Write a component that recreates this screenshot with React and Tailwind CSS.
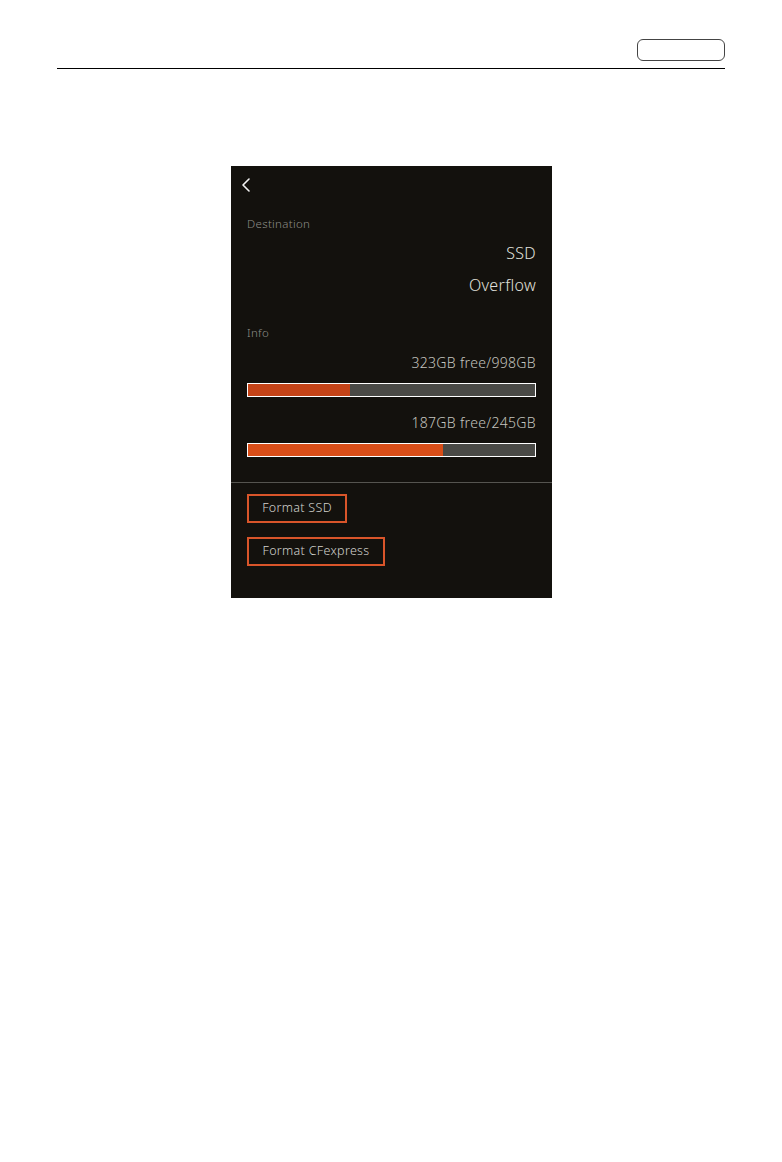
import React from 'react';

function UsageBar({ pct, fill }) {
  return (
    <div className="h-[14px] w-full border-[1.5px] border-white bg-[#4a4a46]">
      <div className={`h-full ${fill}`} style={{ width: `${pct}%` }} />
    </div>
  );
}

export default function App() {
  return (
    <div className="min-h-[1162px] w-[782px] bg-white" style={{ fontFamily: '"Noto Sans", Lato, sans-serif' }}>
      {/* header */}
      <div className="flex justify-end pr-[57px] pt-[39px]">
        <div className="h-[22px] w-[88px] rounded-[6px] border-[1.5px] border-[#444]" />
      </div>
      <div className="mx-[57px] mt-[7px] h-px bg-black" />

      {/* device screen */}
      <div className="ml-[231px] mt-[97px] flex h-[432px] w-[321px] flex-col bg-[#13110d] font-light tracking-[0.02em]">
        <div className="px-[10px] pt-[12px]">
          <svg width="10" height="14" viewBox="0 0 10 14" fill="none">
            <path d="M8 1 L2 7 L8 13" stroke="#f2f2f2" strokeWidth="1.6" strokeLinecap="round" strokeLinejoin="round" />
          </svg>
        </div>

        <div className="px-[16px]">
          <div className="mt-[25px] text-[11.5px] leading-[14px] text-[#8f8f89]">Destination</div>
          <div className="mt-[13px] text-right text-[16px] leading-[18px] text-[#e0e0dc]">SSD</div>
          <div className="mt-[14px] text-right text-[16px] leading-[18px] text-[#e0e0dc]">Overflow</div>

          <div className="mt-[32px] text-[11.5px] leading-[14px] text-[#8f8f89]">Info</div>
          <div className="mt-[15px] text-right text-[14px] leading-[16px] text-[#c4c4bf]">323GB free/998GB</div>
          <div className="mt-[12px]">
            <UsageBar pct={35.5} fill="bg-[#c44317]" />
          </div>
          <div className="mt-[18px] text-right text-[14px] leading-[16px] text-[#c4c4bf]">187GB free/245GB</div>
          <div className="mt-[12px]">
            <UsageBar pct={68} fill="bg-[#d94e18]" />
          </div>
        </div>

        <div className="mt-[25px] h-px bg-[#55544f]" />

        <div className="flex flex-col items-start gap-[14px] px-[16px] pt-[11px]">
          <div className="flex h-[29px] w-[100px] items-center justify-center border-2 border-[#d9552a] text-[12.5px] text-[#d2d2cd]">
            Format SSD
          </div>
          <div className="flex h-[29px] w-[138px] items-center justify-center border-2 border-[#d9552a] text-[12.5px] text-[#d2d2cd]">
            Format CFexpress
          </div>
        </div>
      </div>
    </div>
  );
}
